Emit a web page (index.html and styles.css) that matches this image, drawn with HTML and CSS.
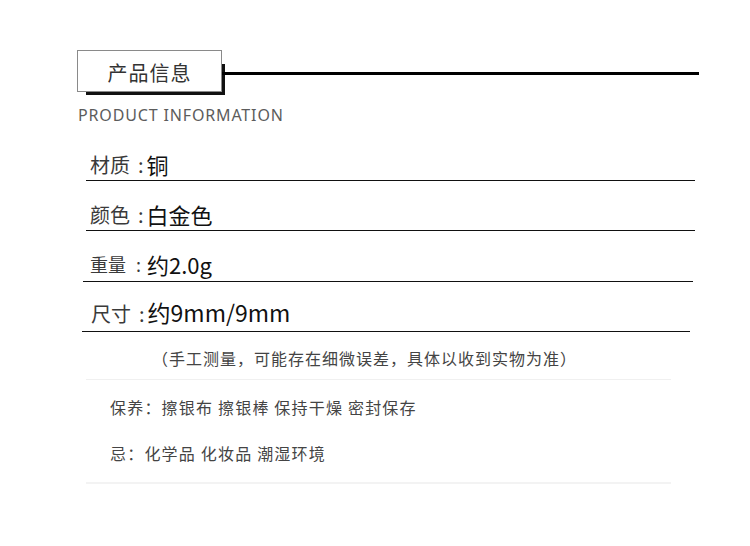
FILE: index.html
```html
<!DOCTYPE html>
<html lang="zh-CN">
<head>
<meta charset="utf-8">
<title>产品信息</title>
<link rel="stylesheet" href="styles.css">
</head>
<body>
<div class="page">
  <div class="header">
    <div class="title-box">产品信息</div>
    <div class="title-rule"></div>
  </div>
  <div class="subtitle">PRODUCT INFORMATION</div>

  <div class="specs">
    <div class="row row--wide">
      <span class="label">材质<span class="colon">:</span></span><span class="value">铜</span>
    </div>
    <div class="row row--wide">
      <span class="label">颜色<span class="colon">:</span></span><span class="value">白金色</span>
    </div>
    <div class="row row--mid">
      <span class="label label--small">重量<span class="colon colon--wide">:</span></span><span class="value">约2.0g</span>
    </div>
    <div class="row row--narrow">
      <span class="label">尺寸<span class="colon">:</span></span><span class="value">约9mm/9mm</span>
    </div>
  </div>

  <div class="note">（手工测量，可能存在细微误差，具体以收到实物为准）</div>

  <div class="care">
    <p class="care-line">保养：擦银布 擦银棒 保持干燥 密封保存</p>
    <p class="care-line">忌：化学品 化妆品 潮湿环境</p>
  </div>
</div>
</body>
</html>
```

FILE: styles.css
```css
html {
  margin: 0;
  padding: 0;
  background: #ffffff;
}

body {
  margin: 0;
  padding: 0;
  width: 750px;
  height: 546px;
  overflow: hidden;
  font-family: "Noto Sans CJK SC", "Noto Sans", sans-serif;
  color: #222;
}

.page {
  padding-top: 50px;
}

.header {
  display: flex;
  align-items: flex-start;
  margin-left: 77px;
  margin-right: 51px;
}

.title-box {
  position: relative;
  box-sizing: border-box;
  width: 145px;
  height: 42px;
  padding-top: 4px;
  border: 1px solid #8a8a8a;
  background: #fff;
  display: flex;
  align-items: center;
  justify-content: center;
  font-size: 20px;
  letter-spacing: 1px;
  color: #333;
  line-height: 1;
}

.title-box::after {
  content: "";
  position: absolute;
  left: 8px;
  top: 13px;
  right: -4px;
  bottom: -4px;
  background: #111;
  z-index: -1;
}

.title-rule {
  flex: 1;
  height: 3px;
  margin-top: 22px;
  background: #000;
}

.subtitle {
  margin: 13px 0 0 78px;
  font-family: "Noto Sans", "Open Sans", sans-serif;
  font-size: 16px;
  letter-spacing: 0.85px;
  color: #5c5c5c;
  line-height: 20px;
}

.specs {
  margin-top: 6px;
}

.row {
  box-sizing: border-box;
  height: 50px;
  display: flex;
  align-items: flex-end;
  padding-bottom: 5px;
  padding-left: 4px;
  border-bottom: 1px solid #111;
  line-height: 1;
}

.row--wide {
  margin-left: 86px;
  width: 609px;
}

.row--mid {
  margin-left: 83px;
  width: 610px;
  height: 51px;
  padding-bottom: 6px;
}

.row--narrow {
  margin-left: 82px;
  width: 608px;
  padding-left: 9px;
  padding-bottom: 7px;
}

.label {
  font-size: 20px;
  color: #3a3a3a;
  white-space: pre;
}

.colon {
  margin-left: 8px;
  margin-right: 1px;
}

.colon--wide {
  margin-left: 10px;
  margin-right: 4px;
}

.label--small {
  font-size: 18px;
  padding-left: 3px;
  padding-bottom: 2px;
}

.value {
  font-size: 22px;
  color: #111;
  margin-left: 2px;
}

.row--narrow .value {
  font-size: 23px;
}

.note {
  margin: 14px 0 0 152px;
  font-size: 16px;
  letter-spacing: 1px;
  color: #444;
  line-height: 24px;
}

.care {
  margin: 9px 0 0 86px;
  width: 585px;
  border-top: 1px solid #f0f0f0;
  border-bottom: 2px solid #f3f3f3;
  padding: 15px 0 17px 24px;
  box-sizing: border-box;
}

.care-line {
  margin: 0;
  font-size: 16px;
  letter-spacing: 1.2px;
  line-height: 24px;
  color: #444;
}

.care-line + .care-line {
  margin-top: 22px;
}
```
